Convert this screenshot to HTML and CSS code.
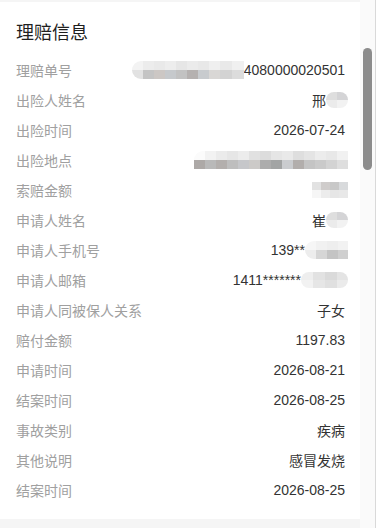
FILE: index.html
```html
<!DOCTYPE html>
<html lang="zh-CN">
<head>
    <meta charset="UTF-8">
    <meta name="viewport" content="width=device-width, initial-scale=1.0">
    <title>理赔信息</title>
    <link rel="stylesheet" href="styles.css">
</head>
<body>
    <div class="page">
        <main class="content">
            <section class="claim-card">
                <h2 class="claim-title">理赔信息</h2>
                <ul class="info-list">
                    <li class="info-row">
                        <span class="info-label">理赔单号</span>
                        <span class="info-value"><span class="mosaic mosaic--id"></span>4080000020501</span>
                    </li>
                    <li class="info-row">
                        <span class="info-label">出险人姓名</span>
                        <span class="info-value">邢<span class="mosaic mosaic--name"></span></span>
                    </li>
                    <li class="info-row">
                        <span class="info-label">出险时间</span>
                        <span class="info-value">2026-07-24</span>
                    </li>
                    <li class="info-row">
                        <span class="info-label">出险地点</span>
                        <span class="info-value"><span class="mosaic mosaic--address"></span></span>
                    </li>
                    <li class="info-row">
                        <span class="info-label">索赔金额</span>
                        <span class="info-value"><span class="mosaic mosaic--amount"></span></span>
                    </li>
                    <li class="info-row">
                        <span class="info-label">申请人姓名</span>
                        <span class="info-value">崔<span class="mosaic mosaic--name"></span></span>
                    </li>
                    <li class="info-row">
                        <span class="info-label">申请人手机号</span>
                        <span class="info-value">139**<span class="mosaic mosaic--phone"></span></span>
                    </li>
                    <li class="info-row">
                        <span class="info-label">申请人邮箱</span>
                        <span class="info-value">1411*******<span class="mosaic mosaic--email"></span></span>
                    </li>
                    <li class="info-row">
                        <span class="info-label">申请人同被保人关系</span>
                        <span class="info-value">子女</span>
                    </li>
                    <li class="info-row">
                        <span class="info-label">赔付金额</span>
                        <span class="info-value">1197.83</span>
                    </li>
                    <li class="info-row">
                        <span class="info-label">申请时间</span>
                        <span class="info-value">2026-08-21</span>
                    </li>
                    <li class="info-row">
                        <span class="info-label">结案时间</span>
                        <span class="info-value">2026-08-25</span>
                    </li>
                    <li class="info-row">
                        <span class="info-label">事故类别</span>
                        <span class="info-value">疾病</span>
                    </li>
                    <li class="info-row">
                        <span class="info-label">其他说明</span>
                        <span class="info-value">感冒发烧</span>
                    </li>
                    <li class="info-row">
                        <span class="info-label">结案时间</span>
                        <span class="info-value">2026-08-25</span>
                    </li>
                </ul>
            </section>
        </main>
        <div class="scrollbar">
            <div class="scrollbar-thumb"></div>
        </div>
    </div>
</body>
</html>
```

FILE: styles.css
```css
:root {
    --clr-bg: #f5f5f5;
    --clr-surface: #ffffff;
    --clr-text: #333333;
    --clr-label: #a0a0a0;
    --font-family: "Liberation Sans", "Noto Sans CJK SC", sans-serif;
}

* {
    margin: 0;
    padding: 0;
    box-sizing: border-box;
}

body {
    font-family: var(--font-family);
    background: var(--clr-bg);
    color: var(--clr-text);
    height: 528px;
    overflow: hidden;
}

.page {
    display: flex;
    height: 100%;
}

.content {
    flex: 1;
    padding-top: 2px;
}

.claim-card {
    background: var(--clr-surface);
    padding: 19px 15px 14px 16px;
}

.claim-title {
    font-size: 18px;
    font-weight: 400;
    line-height: 24px;
    color: #1f1f1f;
    margin-bottom: 10px;
}

.info-list {
    list-style: none;
}

.info-row {
    display: flex;
    justify-content: space-between;
    align-items: center;
    height: 30px;
    font-size: 14px;
}

.info-label {
    color: var(--clr-label);
}

.info-value {
    display: flex;
    align-items: center;
    color: var(--clr-text);
}

/* pixelated privacy blur */
.mosaic {
    display: inline-block;
    height: 18px;
    filter: blur(0.7px);
    margin-right: -3px;
}

.mosaic--id {
    width: 112px;
    margin-right: 0;
    border-radius: 9px 0 0 9px;
    background:
        linear-gradient(90deg, #f3f3f3 0 11px, #ececec 11px 22px, #e9e9e9 22px 33px, #ededed 33px 44px, #e6e6e6 44px 55px, #ebebeb 55px 66px, #e8e8e8 66px 77px, #efefef 77px 88px, #e9e9e9 88px 100px, #f0f0f0 100px) top / 100% 50% no-repeat,
        linear-gradient(90deg, #e2e2e2 0 11px, #c4c4c4 11px 22px, #ccc7c4 22px 33px, #c6c9cc 33px 44px, #c2c2c2 44px 55px, #b5b1b0 55px 66px, #c8cbce 66px 77px, #d9d7d5 77px 88px, #d3d3d3 88px 100px, #dcdcdc 100px) bottom / 100% 50% no-repeat;
}

.mosaic--name {
    width: 22px;
    height: 16px;
    border-radius: 8px;
    background:
        linear-gradient(90deg, #dedede 0 11px, #d4d4d6 11px) top / 100% 50% no-repeat,
        linear-gradient(90deg, #ebebeb 0 11px, #f2f2f2 11px) bottom / 100% 50% no-repeat;
}

.mosaic--address {
    width: 154px;
    border-radius: 9px 0 0 0;
    background:
        linear-gradient(90deg, #fbfbfb 0 11px, #f2f2f2 11px 22px, #ebebeb 22px 33px, #e6e6e6 33px 44px, #ececec 44px 55px, #e1e1e1 55px 66px, #dcdcdc 66px 77px, #e5e5e5 77px 88px, #e9e9e9 88px 99px, #dedede 99px 110px, #e4e4e4 110px 121px, #ececec 121px 132px, #e8e8e8 132px 143px, #f1f1f1 143px) top / 100% 50% no-repeat,
        linear-gradient(90deg, #ada9a7 0 11px, #b9b9b9 11px 22px, #b3afad 22px 33px, #bebebe 33px 44px, #c6c7ca 44px 55px, #cccac8 55px 66px, #acacac 66px 77px, #a2a4a4 77px 88px, #cacccf 88px 99px, #b2aeac 99px 110px, #c4c4c4 110px 121px, #cacaca 121px 132px, #d3d3d3 132px 143px, #dedede 143px) bottom / 100% 50% no-repeat;
}

.mosaic--amount {
    width: 36px;
    height: 16px;
    background:
        linear-gradient(90deg, #e2e2e2 0 9px, #cfcccb 9px 18px, #c8c8c8 18px 27px, #d8dadc 27px) top / 100% 50% no-repeat,
        linear-gradient(90deg, #f6f6f6 0 9px, #ececec 9px 18px, #e6e6e6 18px 27px, #e8e8e8 27px) bottom / 100% 50% no-repeat;
}

.mosaic--phone {
    width: 43px;
    border-radius: 9px 0 0 9px;
    background:
        linear-gradient(90deg, #f6f6f6 0 11px, #f1f1f1 11px 22px, #eeeeee 22px 33px, #f2f2f2 33px) top / 100% 50% no-repeat,
        linear-gradient(90deg, #ededed 0 11px, #d6d6d6 11px 22px, #c4c4c4 22px 33px, #cfcfcf 33px) bottom / 100% 50% no-repeat;
}

.mosaic--email {
    width: 47px;
    height: 16px;
    border-radius: 8px;
    background:
        linear-gradient(90deg, #eeeeee 0 12px, #e2e2e2 12px 24px, #dadada 24px 36px, #e4e4e4 36px) top / 100% 50% no-repeat,
        linear-gradient(90deg, #f2f2f2 0 12px, #e6e6e6 12px 24px, #e0e0e0 24px 36px, #ebebeb 36px) bottom / 100% 50% no-repeat;
}

.scrollbar {
    width: 16px;
    background: #fafafa;
    border-right: 1px solid #d9d9d9;
    padding: 48px 3px 0 3px;
}

.scrollbar-thumb {
    width: 9px;
    height: 122px;
    background: #8c8c8c;
    border-radius: 5px;
}
```
